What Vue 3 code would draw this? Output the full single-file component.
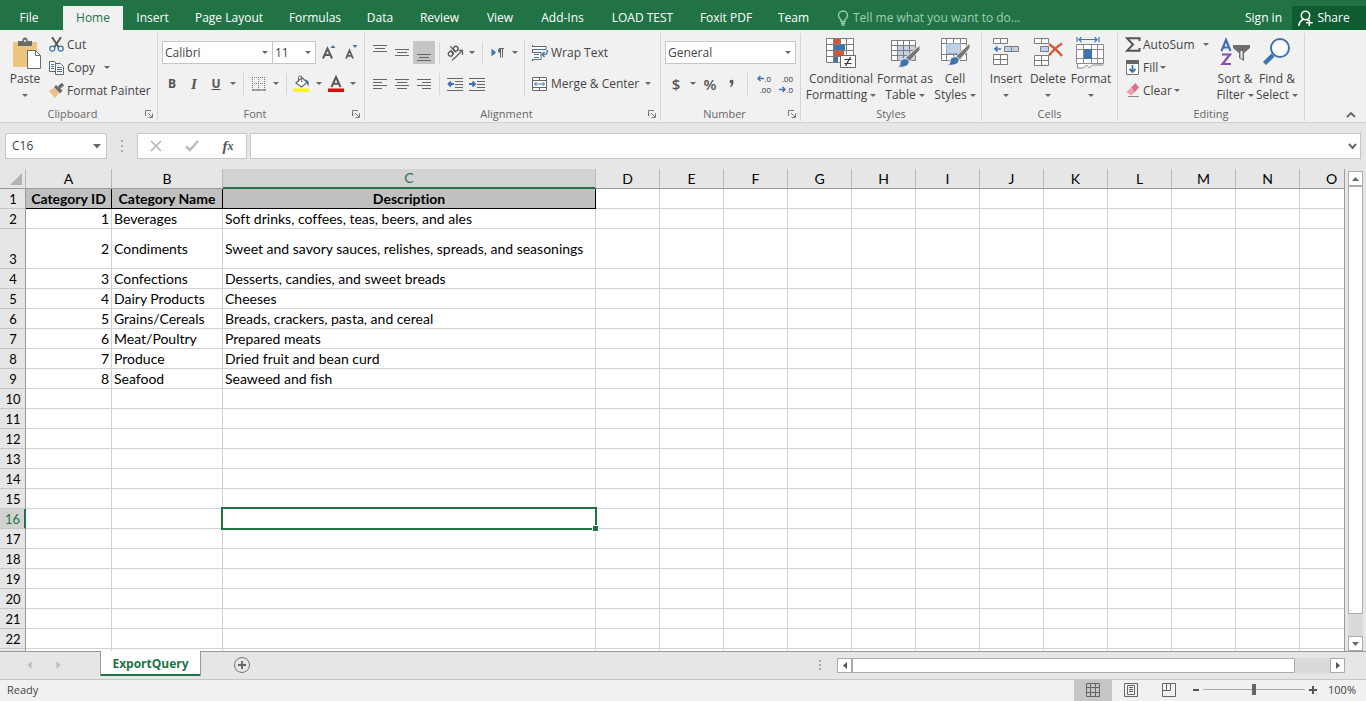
<script setup>
import { ref } from 'vue'

const tabs = ['File', 'Home', 'Insert', 'Page Layout', 'Formulas', 'Data', 'Review', 'View', 'Add-Ins', 'LOAD TEST', 'Foxit PDF', 'Team']
const letters = 'ABCDEFGHIJKLMNO'.split('')
const emptyLetters = letters.slice(3)
const records = [
  ['1', 'Beverages', 'Soft drinks, coffees, teas, beers, and ales'],
  ['2', 'Condiments', 'Sweet and savory sauces, relishes, spreads, and seasonings'],
  ['3', 'Confections', 'Desserts, candies, and sweet breads'],
  ['4', 'Dairy Products', 'Cheeses'],
  ['5', 'Grains/Cereals', 'Breads, crackers, pasta, and cereal'],
  ['6', 'Meat/Poultry', 'Prepared meats'],
  ['7', 'Produce', 'Dried fruit and bean curd'],
  ['8', 'Seafood', 'Seaweed and fish'],
]
const rows = Array.from({ length: 22 }, (_, i) => ({
  n: i + 2 <= 22 ? i + 2 : '',
  cells: records[i] || ['', '', ''],
}))
const cellName = ref('C16')
const formula = ref('')
const zoom = ref(50)
</script>

<template>
  <div class="app">
    <header class="titlebar">
      <nav class="tabs">
        <button v-for="t in tabs" :key="t" class="tab" :class="{ active: t === 'Home', file: t === 'File' }">{{ t }}</button>
      </nav>
      <label class="tell">
        <svg width="12" height="16" viewBox="0 0 12 16" fill="none" stroke="#9fd0b1" stroke-width="1.3"><path d="M4 11.5V9.8C2.600 8.600 1.500 7.500 1.500 5.500a4.500 4.500 0 0 1 9 0c0 2-1.100 3.100-2.500 4.300v1.700zM4 13.500h4M4.500 15.200h3" /></svg>
        <input class="tell-input" type="text" placeholder="Tell me what you want to do..." aria-label="Tell me what you want to do" />
      </label>
      <button class="signin">Sign in</button>
      <button class="share">
        <svg width="15" height="17" viewBox="0 0 15 17" fill="none" stroke="#fff" stroke-width="1.600"><circle cx="7.500" cy="5.500" r="4.200" /><path d="M5.500 9.300C3 10.500 1.200 12.500.800 15.800M9 9.500l1.500 1M11.300 9.500v6.500M8 12.800h6.800" /></svg>
        Share
      </button>
    </header>

    <section class="ribbon">
      <div class="group clipboard">
        <div class="body">
          <button class="big">
            <svg width="32" height="32" viewBox="-2 0 32 32"><path fill="#ecc57f" d="M2 5h24v25H2z" /><path fill="#6b6b6b" d="M7 4h4.500V3a2.500 2.500 0 0 1 5 0v1H21v5H7z" /><circle cx="14" cy="3.800" r="1.100" fill="#f1f1f1" /><path fill="#fff" stroke="#6b6b6b" d="M16.500 13.500h8l5 5v13h-13z" /><path fill="none" stroke="#6b6b6b" d="M24.500 13.500v5h5" /></svg>
            <span>Paste</span><i class="caret low"></i>
          </button>
          <div class="small-col">
            <button class="small">
              <svg width="15" height="15" viewBox="0 0 15 15"><path d="M3 0l6.500 10M12 0L5.500 10" stroke="#5a5a5a" stroke-width="2" fill="none" /><circle cx="3.300" cy="11.600" r="2.500" fill="none" stroke="#3f73ae" stroke-width="1.300" /><circle cx="11.700" cy="11.600" r="2.500" fill="none" stroke="#3f73ae" stroke-width="1.300" /></svg>Cut
            </button>
            <button class="small">
              <svg width="15" height="15" viewBox="0 0 15 15"><path fill="#fff" stroke="#646464" d="M.500 1.500h5l2 2v8h-7z" /><path stroke="#3f73ae" d="M2 4.500h3M2 6.500h3M2 8.500h3" /><path fill="#fff" stroke="#646464" d="M6.500 3.500h5l3 3v8h-8z" /><path stroke="#3f73ae" d="M8 7.500h5M8 9.500h5M8 11.500h5" /></svg>Copy<i class="caret far"></i>
            </button>
            <button class="small">
              <svg width="15" height="15" viewBox="0 0 15 15"><path d="M0 8l5-3.500L10 10l-4 5c-2-1-1.500-2-2.500-3S1.500 9.500 0 8z" fill="#ecc080" /><path d="M5 4l2-2 6.500 5.500-2.500 3z" fill="#6a6a6a" /><path d="M10 4.500l4-3.500" stroke="#6a6a6a" stroke-width="3.500" /></svg>Format Painter
            </button>
          </div>
        </div>
        <div class="foot"><span>Clipboard</span><svg class="launch" width="8" height="8" viewBox="0 0 8 8"><path d="M.500 6V.500H6M3 3l4 4M7.500 3.500v4h-4" fill="none" stroke="#777" /></svg></div>
      </div>

      <div class="group font">
        <div class="body lines">
          <div class="line">
            <span class="combo grow"><select aria-label="Font"><option>Calibri</option></select><i class="caret"></i></span>
            <span class="combo size"><select aria-label="Font size"><option>11</option></select><i class="caret"></i></span>
            <button class="ib" aria-label="Increase font size"><svg width="16" height="18" viewBox="0 0 16 18"><path d="M2 14.500L6.500 4.500 11 14.500M3.800 11h5.500" fill="none" stroke="#5c5c5c" stroke-width="2" /><path d="M9.500 4L12 1l2.500 3z" fill="#3f73ae" /></svg></button>
            <button class="ib" aria-label="Decrease font size"><svg width="16" height="18" viewBox="0 0 16 18"><path d="M3 14.500l3.500-8 3.500 8M4.500 11.800h4" fill="none" stroke="#5c5c5c" stroke-width="1.800" /><path d="M9.500 1h5L12 4z" fill="#3f73ae" /></svg></button>
          </div>
          <div class="line">
            <button class="ib glyph bold">B</button><button class="ib glyph italic">I</button><button class="ib glyph under">U</button><button class="cb" aria-label="Underline style"><i class="caret"></i></button>
            <i class="sep"></i>
            <button class="ib" aria-label="Borders"><svg width="14" height="14" viewBox="0 0 14 14"><path d="M.500 0v13M6.500 0v13M12.500 0v13M0 .500h13M0 6.500h13" stroke="#777" stroke-dasharray="1 1" /><path d="M0 13h14" stroke="#555" /></svg></button><button class="cb" aria-label="Border style"><i class="caret"></i></button>
            <i class="sep"></i>
            <button class="ib" aria-label="Fill color"><svg width="18" height="18" viewBox="0 0 18 18"><path d="M0 13.500h16V17H0z" fill="#f9f900" /><path d="M3 8l6-5.500 5 5L8.500 12z" fill="#fff" stroke="#666" stroke-width="1.200" /><path d="M5.500 7V2.500a1.600 1.600 0 0 1 3.200 0V7" stroke="#666" fill="none" /><path d="M12 4.500c3.500.500 4.500 2.500 3.500 7l-2-4z" fill="#3f73ae" /></svg></button><button class="cb" aria-label="More fill colors"><i class="caret"></i></button>
            <button class="ib" aria-label="Font color"><svg width="16" height="18" viewBox="0 0 16 18"><path d="M0 13.500h16V17H0z" fill="#e00b0b" /><path d="M3.500 12L8 2l4.500 10M5.200 8.800h5.600" fill="none" stroke="#5a5a5a" stroke-width="2" /></svg></button><button class="cb" aria-label="More font colors"><i class="caret"></i></button>
          </div>
        </div>
        <div class="foot"><span>Font</span><svg class="launch" width="8" height="8" viewBox="0 0 8 8"><path d="M.500 6V.500H6M3 3l4 4M7.500 3.500v4h-4" fill="none" stroke="#777" /></svg></div>
      </div>

      <div class="group align">
        <div class="body">
          <div class="lines">
            <div class="line">
              <button class="ib" aria-label="Top align"><svg width="14" height="18" viewBox="0 0 14 18"><path d="M0 1.500h14M2 4.500h10M0 7.500h14" stroke="#666" /></svg></button>
              <button class="ib" aria-label="Middle align"><svg width="14" height="18" viewBox="0 0 14 18"><path d="M0 5.500h14M2 8.500h10M0 11.500h14" stroke="#666" /></svg></button>
              <button class="ib on" aria-label="Bottom align"><svg width="14" height="18" viewBox="0 0 14 18"><path d="M0 10.500h14M2 13.500h10M0 16.500h14" stroke="#666" /></svg></button>
              <i class="sep"></i>
              <button class="ib" aria-label="Orientation"><svg width="18" height="18" viewBox="0 0 18 18" fill="none" stroke="#555" stroke-width="1.300"><g transform="rotate(-45 6 7)"><circle cx="3" cy="8" r="2.300" /><path d="M5.500 5.500v5M8 2.500v8" /><circle cx="10.300" cy="8" r="2.300" /></g><path d="M6 16.500L16 7M12.500 6.500H16.500V11" stroke="#666" /></svg></button><button class="cb" aria-label="Orientation options"><i class="caret"></i></button>
              <i class="sep"></i>
              <button class="ib" aria-label="Text direction"><svg width="14" height="12" viewBox="0 0 14 12"><path d="M.500 1.500L5 5.500l-4.500 4z" fill="#3f73ae" /><path d="M9.500 6A2.500 2.500 0 0 1 9.500 1z" fill="#666" /><path d="M9.500 1v9.500M11.500 1v9.500M8.500 1.500H13" stroke="#666" /></svg></button><button class="cb" aria-label="Text direction options"><i class="caret"></i></button>
            </div>
            <div class="line">
              <button class="ib" aria-label="Align left"><svg width="14" height="14" viewBox="0 0 14 14"><path d="M0 2.500h14M0 5.500h9M0 8.500h14M0 11.500h9" stroke="#666" /></svg></button>
              <button class="ib" aria-label="Center"><svg width="14" height="14" viewBox="0 0 14 14"><path d="M0 2.500h14M2 5.500h10M0 8.500h14M2 11.500h10" stroke="#666" /></svg></button>
              <button class="ib" aria-label="Align right"><svg width="14" height="14" viewBox="0 0 14 14"><path d="M0 2.500h14M5 5.500h9M0 8.500h14M5 11.500h9" stroke="#666" /></svg></button>
              <i class="sep"></i>
              <button class="ib" aria-label="Decrease indent"><svg width="16" height="14" viewBox="0 0 16 14"><path d="M0 1.500h16M8 4.500h8M8 7.500h8M8 10.500h8M0 13.500h16" stroke="#666" /><path d="M7 7H2M4 4.500L1.500 7 4 9.500" stroke="#3f73ae" stroke-width="1.800" fill="none" /></svg></button>
              <button class="ib" aria-label="Increase indent"><svg width="16" height="14" viewBox="0 0 16 14"><path d="M0 1.500h16M8 4.500h8M8 7.500h8M8 10.500h8M0 13.500h16" stroke="#666" /><path d="M0 7h5M3.500 4.500L6 7 3.500 9.500" stroke="#3f73ae" stroke-width="1.800" fill="none" /></svg></button>
            </div>
          </div>
          <i class="sep tall"></i>
          <div class="lines">
            <button class="line wide"><svg width="16" height="16" viewBox="0 0 16 16"><path d="M.500 0v16" stroke="#666" /><path d="M0 1.500h14v3H0M0 7.500h9v7H0" fill="#fff" stroke="#666" /><path d="M2 4.500h12M2 9.500h5M2 12.500h5" stroke="#3f73ae" /><path d="M15.200 5c.500 4-1 4.500-4 4.500M12.500 7L10 9.500l2.500 2.500" stroke="#3f73ae" stroke-width="1.400" fill="none" /></svg>Wrap Text</button>
            <button class="line wide"><svg width="16" height="16" viewBox="0 0 16 16"><path d="M.500 1.500h14v13H.500zM.500 4.500h14M.500 11.500h14M7.500 1.500v3M7.500 11.500v3" fill="#fff" stroke="#666" /><path d="M2.500 8h10M4.500 6l-2 2 2 2M10.500 6l2 2-2 2" stroke="#3f73ae" fill="none" /></svg>Merge &amp; Center<i class="caret"></i></button>
          </div>
        </div>
        <div class="foot"><span>Alignment</span><svg class="launch" width="8" height="8" viewBox="0 0 8 8"><path d="M.500 6V.500H6M3 3l4 4M7.500 3.500v4h-4" fill="none" stroke="#777" /></svg></div>
      </div>

      <div class="group number">
        <div class="body lines">
          <div class="line"><span class="combo grow"><select aria-label="Number format"><option>General</option></select><i class="caret"></i></span></div>
          <div class="line">
            <button class="ib glyph sym">$</button><button class="cb" aria-label="Currency options"><i class="caret"></i></button>
            <button class="ib glyph sym">%</button>
            <button class="ib" aria-label="Comma style"><svg width="8" height="10" viewBox="0 0 8 10"><path d="M1.500 2.500a2 2 0 1 1 4 .500C5.500 5.500 4.500 7 2.500 8l-.500-.800C3 6.500 3.500 5.500 3.500 4.500a2 2 0 0 1-2-2z" fill="#555" /></svg></button>
            <i class="sep"></i>
            <button class="ib dec" aria-label="Increase decimal"><span><svg width="7" height="7" viewBox="0 0 7 7"><path d="M7 3.500H1M3.500 1L1 3.500 3.500 6" stroke="#3f73ae" stroke-width="1.500" fill="none" /></svg>.0</span><span>.00</span></button>
            <button class="ib dec" aria-label="Decrease decimal"><span>.00</span><span><svg width="7" height="7" viewBox="0 0 7 7"><path d="M0 3.500h6M3.500 1L6 3.500 3.500 6" stroke="#3f73ae" stroke-width="1.500" fill="none" /></svg>.0</span></button>
          </div>
        </div>
        <div class="foot"><span>Number</span><svg class="launch" width="8" height="8" viewBox="0 0 8 8"><path d="M.500 6V.500H6M3 3l4 4M7.500 3.500v4h-4" fill="none" stroke="#777" /></svg></div>
      </div>

      <div class="group styles">
        <div class="body">
          <button class="big">
            <svg width="32" height="32" viewBox="0 0 32 32"><path d="M1.500 1.500h27v24h-27z" fill="#fff" /><path d="M9 2h6v5H9zM9 14h10v5H9z" fill="#d65532" /><path d="M9 8h11v5H9zM9 20h4v5H9z" fill="#3f73ae" /><path d="M1.500 1.500h27v24h-27zM1.500 7.500h27M1.500 13.500h27M1.500 19.500h27M8.500 1.500v24M15.500 1.500v6M21.500 1.500v24" fill="none" stroke="#7d7d7d" /><path d="M15.500 18.500h15v12h-15z" fill="#fff" stroke="#666" /><path d="M19.500 22.500h7M19.500 26.500h7M25.500 20l-5 9" stroke="#333" stroke-width="1.200" /></svg>
            <span>Conditional</span><span>Formatting<i class="caret"></i></span>
          </button>
          <button class="big">
            <svg width="32" height="32" viewBox="0 0 32 32"><path d="M2.500 3.500h24v20h-24z" fill="#fff" /><path d="M8.500 8.500h18v15h-18z" fill="#c0d1e5" /><path d="M2.500 3.500h24v20h-24zM2.500 8.500h24M2.500 13.500h24M2.500 18.500h24M8.500 3.500v20M14.500 3.500v20M20.500 3.500v20" fill="none" stroke="#7d7d7d" /><path d="M31 8v5L20 25l-4-4z" fill="#777" stroke="#f1f1f1" /><path d="M14 22c4-1 7 1 6 4s-5 5-12 4c3-1 3-2 3-4 0-2 1-3 3-4z" fill="#3f73ae" stroke="#f1f1f1" /></svg>
            <span>Format as</span><span>Table<i class="caret"></i></span>
          </button>
          <button class="big">
            <svg width="32" height="32" viewBox="0 0 32 32"><path d="M2.500 1.500h25v22h-25z" fill="#fff" /><path d="M2.500 1.500h25v22h-25zM2.500 6.500h25M2.500 17.500h25M7.500 1.500v22M21.500 1.500v22M14.500 1.500v5M14.500 17.500v6" fill="none" stroke="#7d7d7d" /><path d="M7.500 6.500h14v10h-14z" fill="#c0d1e5" stroke="#92afd1" /><path d="M31 6v5L20 24l-4-4z" fill="#777" stroke="#f1f1f1" /><path d="M14 20c4-1 7 1 6 4s-5 5-12 4c3-1 3-2 3-4 0-2 1-3 3-4z" fill="#3f73ae" stroke="#f1f1f1" /></svg>
            <span>Cell</span><span>Styles<i class="caret"></i></span>
          </button>
        </div>
        <div class="foot"><span>Styles</span></div>
      </div>

      <div class="group cells">
        <div class="body">
          <button class="big">
            <svg width="32" height="32" viewBox="0 0 32 32"><path d="M3.500 1.500h14v5h-14zM10.500 1.500v5M3.500 17.500h14v10h-14zM3.500 22.500h14M10.500 17.500v10" fill="#fff" stroke="#7d7d7d" /><path d="M14.500 9.500h14v5h-14zM21.500 9.500v5" fill="#c0d1e5" stroke="#7d7d7d" /><path d="M11 12H5M7.500 9.500L5 12l2.500 2.500" fill="none" stroke="#3f73ae" stroke-width="1.600" /></svg>
            <span>Insert</span><i class="caret low"></i>
          </button>
          <button class="big">
            <svg width="32" height="32" viewBox="0 0 32 32"><path d="M2.500 1.500h14v5h-14zM9.500 1.500v5M2.500 18.500h14v10h-14zM2.500 23.500h14M9.500 18.500v10" fill="#fff" stroke="#7d7d7d" /><path d="M8.500 9.500h8v5h-8z" fill="#c0d1e5" stroke="#7d7d7d" /><path d="M17 7c4 3 9 7 13 12M30 6.500c-5 3-9 7-13 12" fill="none" stroke="#d65532" stroke-width="2.200" /></svg>
            <span>Delete</span><i class="caret low"></i>
          </button>
          <button class="big">
            <svg width="32" height="32" viewBox="0 0 32 32"><path d="M2 0v5M24 0v5M4 2.500h18M6.500 0L4 2.500 6.500 5M19.500 0L22 2.500 19.500 5" fill="none" stroke="#3f73ae" stroke-width="1.200" /><path d="M1.500 7.500h27v19h-27z" fill="#fff" /><path d="M1.500 7.500h27v19h-27zM1.500 12.500h27M1.500 21.500h27M8.500 7.500v19M16.500 7.500v19M22.500 7.500v19" fill="none" stroke="#8a8a8a" /><path d="M9 12h8v10H9z" fill="#3f73ae" /><path d="M2.500 27v4h6l3-3 3 3 3-3h11" fill="#fff" stroke="#8a8a8a" /></svg>
            <span>Format</span><i class="caret low"></i>
          </button>
        </div>
        <div class="foot"><span>Cells</span></div>
      </div>

      <div class="group editing">
        <div class="body">
          <div class="small-col">
            <button class="small"><svg width="16" height="15" viewBox="0 0 16 15"><path d="M14.500 4V1.200H2L8 7.500l-6 6.300h12.500V11" fill="none" stroke="#555" stroke-width="2" /></svg>AutoSum<i class="caret far"></i></button>
            <button class="small"><svg width="16" height="15" viewBox="0 0 16 15"><path d="M1.500 1.500h12v13h-12z" fill="#fff" stroke="#777" /><path d="M1 0h13v4H1z" fill="#666" /><path d="M7.500 5v7M4.500 9l3 3 3-3" stroke="#3f73ae" stroke-width="1.800" fill="none" /></svg>Fill<i class="caret"></i></button>
            <button class="small"><svg width="16" height="15" viewBox="0 0 16 15"><path d="M6 4.500L10.500 0 14 4.500 9.500 9.500z" fill="#e0708a" /><path d="M1.500 9L5.500 5l4 4.500L6 12.500z" fill="#ef9db0" /><path d="M3 13.500h11" stroke="#888" /></svg>Clear<i class="caret"></i></button>
          </div>
          <button class="big">
            <svg width="32" height="32" viewBox="0 0 32 32"><path d="M2.500 14L7 3l4.500 11M4 10.500h6" fill="none" stroke="#3f73ae" stroke-width="2.200" /><path d="M3 17.500h8L3.500 27H12" fill="none" stroke="#8551a8" stroke-width="2.200" /><path d="M14 8h17v3l-6 5v8l-5-3v-5l-6-5z" fill="#6d6d6d" /><path d="M21.500 14h2v8l-2-1z" fill="#f1f1f1" /></svg>
            <span>Sort &amp;</span><span>Filter<i class="caret"></i></span>
          </button>
          <button class="big">
            <svg width="32" height="32" viewBox="0 0 32 32"><path d="M12 18L3.500 26.500" stroke="#3f73ae" stroke-width="4.500" /><circle cx="19" cy="11" r="9" fill="#fff" stroke="#3f73ae" stroke-width="2" /></svg>
            <span>Find &amp;</span><span>Select<i class="caret"></i></span>
          </button>
        </div>
        <div class="foot"><span>Editing</span></div>
      </div>
      <button class="collapse" aria-label="Collapse the ribbon"><svg width="10" height="8" viewBox="0 0 10 8"><path d="M1 6l4-4 4 4" fill="none" stroke="#666" stroke-width="1.800" /></svg></button>
    </section>

    <section class="formula-bar">
      <label class="name-box"><input v-model="cellName" type="text" aria-label="Name box" /><svg width="8" height="5" viewBox="0 0 8 5"><path d="M0 0h8L4 4.500z" fill="#666" /></svg></label>
      <svg class="grip" width="2" height="12" viewBox="0 0 2 12"><path d="M0 0h2v2H0zM0 5h2v2H0zM0 10h2v2H0z" fill="#aaa" /></svg>
      <div class="fx-box">
        <button aria-label="Cancel"><svg width="12" height="12" viewBox="0 0 12 12"><path d="M1 1l10 10M11 1L1 11" stroke="#b4b4b4" stroke-width="1.600" /></svg></button>
        <button aria-label="Enter"><svg width="14" height="12" viewBox="0 0 14 12"><path d="M1 6.500L5 10l8-9" fill="none" stroke="#bcbcbc" stroke-width="2.400" /></svg></button>
        <button class="fx" aria-label="Insert function">f<sub>x</sub></button>
      </div>
      <label class="formula"><input v-model="formula" type="text" aria-label="Formula" /><svg width="9" height="7" viewBox="0 0 9 7"><path d="M1 1l3.500 4L8 1" fill="none" stroke="#666" stroke-width="2" /></svg></label>
    </section>

    <main class="workspace">
      <div class="sheet">
        <table>
          <colgroup><col class="c-num" /><col class="c-a" /><col class="c-b" /><col class="c-c" /><col v-for="l in emptyLetters" :key="l" class="c-std" /></colgroup>
          <thead>
            <tr>
              <th class="corner"><svg width="12" height="12" viewBox="0 0 12 12"><path d="M12 0v12H0z" fill="#b4b4b4" /></svg></th>
              <th v-for="l in letters" :key="l" scope="col" :class="{ sel: l === 'C' }">{{ l }}</th>
            </tr>
          </thead>
          <tbody>
            <tr class="heading">
              <th scope="row">1</th>
              <td>Category ID</td><td>Category Name</td><td>Description</td>
              <td v-for="l in emptyLetters" :key="l"></td>
            </tr>
            <tr v-for="(r, i) in rows" :key="i" :class="{ tall: r.n === 3 }">
              <th scope="row" :class="{ sel: r.n === 16 }">{{ r.n }}</th>
              <td class="num">{{ r.cells[0] }}</td>
              <td>{{ r.cells[1] }}</td>
              <td :class="{ current: r.n === 16 }">{{ r.cells[2] }}<i v-if="r.n === 16" class="cursor"></i></td>
              <td v-for="l in emptyLetters" :key="l"></td>
            </tr>
          </tbody>
        </table>
      </div>
      <div class="vscroll">
        <button aria-label="Scroll up"><svg width="7" height="4" viewBox="0 0 7 4"><path d="M0 4h7L3.500 0z" fill="#666" /></svg></button>
        <div class="vthumb"></div>
        <div class="vtrack"></div>
        <button aria-label="Scroll down"><svg width="7" height="4" viewBox="0 0 7 4"><path d="M0 0h7L3.500 4z" fill="#666" /></svg></button>
      </div>
    </main>

    <section class="sheetbar">
      <div class="arrows">
        <button aria-label="Previous sheet"><svg width="5" height="8" viewBox="0 0 5 8"><path d="M4.500 0v8L.500 4z" fill="#bbb" /></svg></button>
        <button aria-label="Next sheet"><svg width="5" height="8" viewBox="0 0 5 8"><path d="M.500 0v8l4-4z" fill="#bbb" /></svg></button>
      </div>
      <button class="sheet-tab">ExportQuery</button>
      <button class="add" aria-label="New sheet"><svg width="18" height="18" viewBox="0 0 18 18"><circle cx="9" cy="9" r="7.500" fill="none" stroke="#777" /><path d="M9 5v8M5 9h8" stroke="#666" stroke-width="1.800" /></svg></button>
      <svg class="grip2" width="3" height="12" viewBox="0 0 3 12"><path d="M0 0h2v2H0zM0 4h2v2H0zM0 8h2v2H0z" fill="#aaa" /></svg>
      <div class="hscroll">
        <button aria-label="Scroll left"><svg width="4" height="7" viewBox="0 0 4 7"><path d="M4 0v7L0 3.500z" fill="#555" /></svg></button>
        <div class="hthumb"></div>
        <div class="htrack"></div>
        <button aria-label="Scroll right"><svg width="4" height="7" viewBox="0 0 4 7"><path d="M0 0v7l4-3.500z" fill="#555" /></svg></button>
      </div>
    </section>

    <footer class="status">
      <span class="ready">Ready</span>
      <button class="view on" aria-label="Normal view"><svg width="14" height="14" viewBox="0 0 14 14"><path d="M.500.500h13v13H.500zM.500 4.500h13M.500 9.500h13M4.500.500v13M9.500.500v13" fill="none" stroke="#666" /></svg></button>
      <button class="view" aria-label="Page layout view"><svg width="14" height="14" viewBox="0 0 14 14"><path d="M.500.500h13v13H.500zM3.500 2.500h7v9h-7zM5 4.500h4M5 6.500h4M5 8.500h4" fill="none" stroke="#666" /></svg></button>
      <button class="view" aria-label="Page break view"><svg width="14" height="14" viewBox="0 0 14 14"><path d="M.500.500h13v13H.500zM.500 7.500h8v-7M4.500.500v7" fill="none" stroke="#666" /></svg></button>
      <button class="step" aria-label="Zoom out"><svg width="10" height="10" viewBox="0 0 10 10"><path d="M2 5h6" stroke="#555" stroke-width="2" /></svg></button>
      <input v-model="zoom" class="zoom" type="range" min="0" max="100" aria-label="Zoom" />
      <button class="step" aria-label="Zoom in"><svg width="10" height="10" viewBox="0 0 10 10"><path d="M1 5h8M5 1v8" stroke="#555" stroke-width="2" /></svg></button>
      <span class="pct">100%</span>
    </footer>
  </div>
</template>

<style>
html, body { margin: 0; background: #e6e6e6; }
</style>

<style scoped>
.app { height: 100vh; display: flex; flex-direction: column; overflow: hidden; background: #e6e6e6; color: #444; font-family: "Open Sans", "Noto Sans", sans-serif; font-size: 12px; line-height: 16px; }
button, input, select { font: inherit; color: inherit; border: 0; margin: 0; padding: 0; background: none; outline: none; }
button { display: flex; align-items: center; justify-content: center; white-space: nowrap; }
svg { flex: none; display: block; }
i { font-style: normal; }

.titlebar { display: flex; align-items: flex-end; height: 30px; flex: none; background: #217346; color: #fff; }
.tabs { display: grid; grid-template-columns: 63px 60px 59px 94px 78px 52px 67px 54px 71px 89px 78px 57px; }
.tab { height: 24px; }
.tab.file { padding-right: 5px; }
.tab.active { background: #f1f1f1; color: #217346; }
.tell { display: flex; align-items: center; flex: 1; height: 24px; gap: 4px; padding-left: 15px; }
.tell-input { flex: 1; min-width: 0; }
.tell-input::placeholder { color: #9fd0b1; opacity: 1; }
.signin { height: 24px; padding: 0 10px; }
.share { height: 24px; width: 74px; gap: 4px; padding-right: 10px; background: #0e5c2f; }

.ribbon { display: flex; height: 89px; flex: none; padding-top: 3px; background: #f1f1f1; border-bottom: 1px solid #d2d2d2; }
.group { display: flex; flex-direction: column; flex: none; height: 88px; box-sizing: border-box; border-right: 1px solid #d6d6d6; }
.body { display: flex; height: 74px; box-sizing: border-box; }
.clipboard { width: 158px; }
.font { width: 207px; }
.align { width: 296px; }
.number { width: 140px; }
.styles { width: 181px; }
.cells { width: 136px; }
.editing { width: 187px; }
.foot { display: flex; align-items: center; height: 14px; line-height: 14px; color: #666; font-size: 11px; padding-right: 4px; }
.foot span { flex: 1; text-align: center; }
.styles .foot, .cells .foot, .editing .foot { padding-right: 0; }
.caret { width: 0; height: 0; flex: none; display: inline-block; border: 3px solid transparent; border-top-color: #666; border-bottom: 0; vertical-align: middle; margin-left: 3px; }
.caret.low { margin: 7px 0 0; }
.caret.far { margin-left: 10px; }
.big { flex-direction: column; justify-content: flex-start; padding-top: 4px; }
.big svg { margin-bottom: 2px; }
.clipboard .body { padding-left: 4px; }
.clipboard .big { width: 42px; }
.clipboard .small-col { padding-left: 3px; }
.small-col { display: flex; flex-direction: column; align-items: flex-start; }
.small { height: 23px; gap: 3px; }
.small .caret { margin-left: 0; }
.small .caret.far { margin-left: 6px; }
.styles .body { padding-left: 5px; }
.styles .big:nth-child(1) { width: 70px; }
.styles .big:nth-child(2) { width: 58px; }
.styles .big:nth-child(3) { width: 42px; }
.cells .body { padding-left: 3px; }
.cells .big { width: 42px; }
.cells .big:nth-child(3) { width: 44px; }
.editing .body { padding-left: 7px; }
.editing .small-col { width: 89px; }
.editing .small { gap: 2px; }
.editing .big { width: 42px; }
.collapse { margin: 75px 9px 0 auto; height: 14px; width: 12px; }

.lines { display: flex; flex-direction: column; gap: 8px; padding-top: 8px; }
.line { display: flex; align-items: center; height: 23px; justify-content: flex-start; }
.font .line { padding: 0 2px 0 3px; }
.font .line:first-child { padding-left: 4px; }
.align .body { padding-left: 4px; }
.align .body .lines { align-items: flex-start; }
.number .line { padding: 0 4px; }
.combo { position: relative; height: 23px; box-sizing: border-box; display: flex; background: #fff; border: 1px solid #c6c6c6; }
.combo.grow { flex: 1; }
.combo.size { width: 44px; flex: none; margin: 0 2px 0 -1px; }
.combo select { appearance: none; width: 100%; padding-left: 2px; }
.combo .caret { position: absolute; right: 4px; top: 9px; pointer-events: none; }
.ib { width: 22px; height: 23px; flex: none; }
.ib.on { background: #c6c6c6; }
.cb { width: 12px; height: 23px; flex: none; }
.cb .caret { margin: 0; }
.glyph { font-weight: 700; color: #555; }
.italic { font-style: italic; font-family: "Liberation Serif", serif; font-size: 15px; }
.under { text-decoration: underline; }
.sym { font-weight: 600; font-size: 15px; }
.sep { width: 1px; height: 22px; background: #d6d6d6; margin: 0 4px; flex: none; }
.sep.tall { height: 56px; margin: 7px 7px 0 3px; }
.wide { gap: 3px; }
.dec { flex-direction: column; align-items: stretch; font-size: 8px; line-height: 11px; color: #333; }
.dec span { display: flex; justify-content: flex-end; align-items: center; padding-right: 3px; height: 11px; }

.formula-bar { display: flex; height: 26px; flex: none; padding: 10px 5px; }
.name-box, .fx-box, .formula { display: flex; align-items: center; background: #fff; border: 1px solid #c6c6c6; box-sizing: border-box; }
.name-box { width: 102px; padding: 0 5px 0 6px; }
.name-box input { flex: 1; min-width: 0; }
.grip { margin: 7px 14px; }
.fx-box { width: 110px; margin-right: 3px; }
.fx-box button { flex: 1; height: 24px; }
.fx { font: italic 700 15px "Liberation Serif", serif; color: #555; }
.fx sub { font-size: 12px; line-height: 8px; }
.formula { flex: 1; padding: 0 3px; }
.formula input { flex: 1; min-width: 0; }

.workspace { display: flex; flex: 1; min-height: 0; }
.sheet { flex: 1; min-width: 0; overflow: hidden; border-right: 1px solid #9b9b9b; color: #000; font-family: Lato, Carlito, sans-serif; font-size: 14px; line-height: 18px; font-variant-ligatures: none; }
table { table-layout: fixed; width: 1364px; border-collapse: separate; border-spacing: 0; background: #fff; }
.c-num { width: 26px; }
.c-a { width: 86px; }
.c-b { width: 111px; }
.c-c { width: 373px; }
.c-std { width: 64px; }
th, td { height: 20px; box-sizing: border-box; padding: 0 2px; border-right: 1px solid #d0d0d8; border-bottom: 1px solid #d0d0d8; white-space: nowrap; font-weight: 400; text-align: left; }
td.num { text-align: right; }
thead th { text-align: center; background: #e6e6e6; border-right-color: #b8b8b8; border-bottom-color: #999; line-height: 16px; }
thead th.sel { background: #d2d2d2; color: #217346; border-bottom: 2px solid #217346; }
tbody th { text-align: center; background: #e6e6e6; vertical-align: bottom; border-right-color: #999; border-bottom-color: #c6c6c6; padding: 0 0 0 1px; font-size: 13px; }
tbody th.sel { background: #d2d2d2; color: #217346; border-right: 2px solid #217346; }
.corner svg { margin-left: 8px; }
.tall td, .tall th { height: 40px; }
.heading td:nth-child(-n + 4) { background: #c0c0c0; font-weight: 700; text-align: center; border-color: #000; }
.current { position: relative; }
.cursor { position: absolute; inset: -2px; border: 2px solid #217346; }
.cursor::after { content: ""; position: absolute; right: -4px; bottom: -4px; width: 5px; height: 5px; background: #217346; border: 1px solid #fff; }

.vscroll { width: 15px; flex: none; display: flex; flex-direction: column; padding: 2px 3px 0; background: #e6e6e6; }
.vscroll button, .hscroll button { width: 15px; height: 15px; flex: none; box-sizing: border-box; background: #fff; border: 1px solid #ababab; }
.vthumb { flex: 428; background: #fff; border: 1px solid #ababab; }
.vtrack { flex: 22; background: #dadada; }

.sheetbar { display: flex; height: 27px; flex: none; border-top: 1px solid #999; padding-right: 21px; }
.arrows { width: 100px; display: flex; padding: 3px 0 4px 15px; box-sizing: border-box; }
.arrows button { width: 29px; height: 20px; }
.sheet-tab { width: 101px; height: 25px; margin-top: -1px; box-sizing: border-box; background: #fff; border: solid #999; border-width: 0 1px; box-shadow: inset 0 -2px #217346; color: #217346; font-weight: 700; }
.add { width: 24px; height: 26px; margin-left: 29px; }
.grip2 { margin: 8px 15px 0 auto; }
.hscroll { display: flex; width: 508px; height: 15px; margin-top: 6px; }
.hthumb { flex: 443; background: #fff; border: 1px solid #ababab; }
.htrack { flex: 35; background: #dadada; }

.status { display: flex; align-items: center; height: 21px; flex: none; background: #f1f1f1; border-top: 1px solid #c6c6c6; font-size: 11px; }
.ready { flex: 1; padding: 0 0 2px 7px; }
.view { width: 38px; height: 21px; padding-bottom: 2px; }
.view.on { background: #c6c6c6; }
.step { width: 10px; height: 19px; margin-bottom: 2px; }
.view + .step { margin-left: 3px; }
.zoom { appearance: none; width: 102px; height: 11px; margin: 0 3px 2px 2px; background: linear-gradient(#aaa, #aaa) center / 100% 1px no-repeat; }
.zoom::-webkit-slider-thumb { appearance: none; width: 4px; height: 11px; background: #666; }
.pct { width: 48px; padding-bottom: 2px; text-align: center; }
</style>
